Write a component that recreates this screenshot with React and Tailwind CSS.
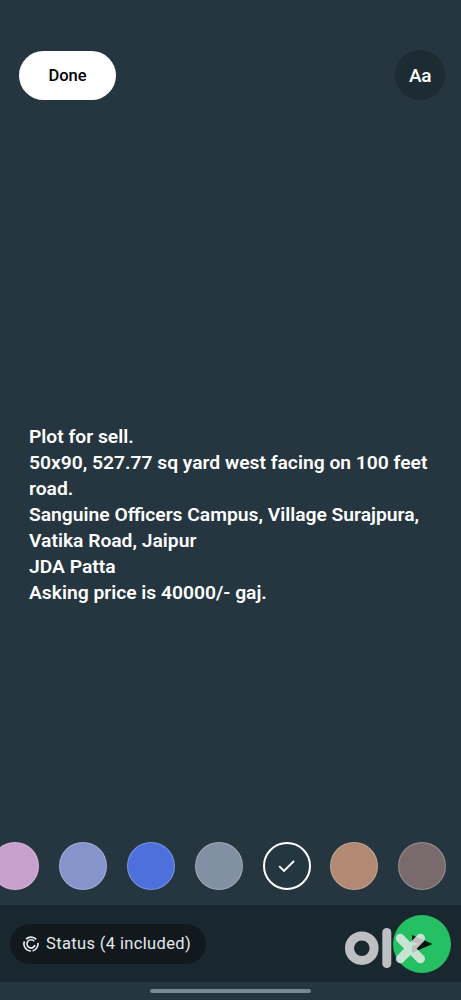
import clsx from "clsx";

const swatches = [
  { id: "pink", color: "bg-[#c8a0cc]" },
  { id: "lavender", color: "bg-[#8794cb]" },
  { id: "blue", color: "bg-[#4d70dc]" },
  { id: "slate", color: "bg-[#8190a3]" },
  { id: "night", color: "bg-[#243640]" },
  { id: "copper", color: "bg-[#b28972]" },
  { id: "mauve", color: "bg-[#796a6e]" },
];

const lines = [
  "Plot for sell.",
  "50x90, 527.77 sq yard west facing on 100 feet",
  "road.",
  "Sanguine Officers Campus, Village Surajpura,",
  "Vatika Road, Jaipur",
  "JDA Patta",
  "Asking price is 40000/- gaj.",
];

function StatusIcon() {
  return (
    <svg
      className="w-4 h-4 shrink-0"
      viewBox="0 0 16 16"
      fill="none"
      stroke="currentColor"
      strokeWidth="1.7"
    >
      <path d="M13.2 3.4A7 7 0 0 0 3 3.2" />
      <path d="M1.5 5.3A7 7 0 0 0 8 15" />
      <path d="M9.6 14.8A7 7 0 0 0 14.9 6.8" />
      <path d="M11.2 5.2A4.1 4.1 0 1 0 12 9" />
    </svg>
  );
}

function Swatch({ color, selected }) {
  return (
    <button
      className={clsx(
        "w-12 h-12 rounded-full shrink-0 flex items-center justify-center",
        color,
        selected ? "border-2 border-white" : "border border-white/25"
      )}
    >
      {selected && (
        <svg className="w-6 h-6" viewBox="0 0 24 24" fill="none">
          <path
            d="M4.2 12.2L9 17L19 7"
            stroke="white"
            strokeWidth="1.9"
          />
        </svg>
      )}
    </button>
  );
}

function Watermark() {
  return (
    <svg
      className="absolute left-[344px] top-[22px] w-[84px] h-[43px]"
      viewBox="0 0 84 43"
      fill="none"
      strokeWidth="9"
      strokeLinecap="round"
    >
      <g stroke="#e3e1e4" strokeOpacity="0.82">
        <circle cx="17.8" cy="21.2" r="12.3" />
        <path d="M42.8 5.5V36.5" />
      </g>
      <path
        d="M56.3 11.3L76.5 31.8M76.5 11.3L56.3 31.8"
        stroke="#f5eef1"
        strokeOpacity="0.78"
      />
    </svg>
  );
}

function App() {
  return (
    <div className="w-[461px] h-[1000px] bg-[#253640] overflow-hidden flex flex-col text-white font-[Roboto,sans-serif]">
      <header className="pt-[51px] pl-[19px] pr-4 flex items-start justify-between">
        <button className="w-[97px] h-[49px] pt-px rounded-full bg-white text-black text-[16.5px] font-medium">
          Done
        </button>
        <button className="w-[50px] h-[50px] -mt-px pt-[3px] rounded-full bg-[#1d2b32] text-[19px] font-medium tracking-[-0.5px]">
          Aa
        </button>
      </header>

      <main className="flex-1 pt-[324px] pl-[29px] text-[19.25px] leading-[26px] font-semibold whitespace-nowrap">
        {lines.map((line) => (
          <p key={line}>{line}</p>
        ))}
      </main>

      <div className="h-12 mb-[15px] -ml-[9px] flex gap-[19.9px]">
        {swatches.map((swatch) => (
          <Swatch
            key={swatch.id}
            color={swatch.color}
            selected={swatch.id === "night"}
          />
        ))}
      </div>

      <div className="relative h-[77px] bg-[#19282e] pl-[10px] pr-[10px] flex items-center justify-between">
        <button className="w-[196px] h-10 rounded-full bg-[#12191e] text-[#e4e9eb] pl-[13px] flex items-center gap-[7px] whitespace-nowrap">
          <StatusIcon />
          <span className="pt-0.5 text-[16.5px] tracking-[0.36px]">
            Status (4 included)
          </span>
        </button>
        <button className="w-[58px] h-[58px] rounded-full bg-[#24c063] flex items-center justify-center">
          <svg className="w-6 h-6" viewBox="0 0 24 24" fill="#071510">
            <path d="M2 3L22.5 12L2 21V14L9 12L2 10Z" />
          </svg>
        </button>
        <Watermark />
      </div>

      <footer className="h-[18px] pt-[7px] flex justify-center">
        <div className="w-[161px] h-1 rounded-full bg-[#788891]" />
      </footer>
    </div>
  );
}

export default App;
